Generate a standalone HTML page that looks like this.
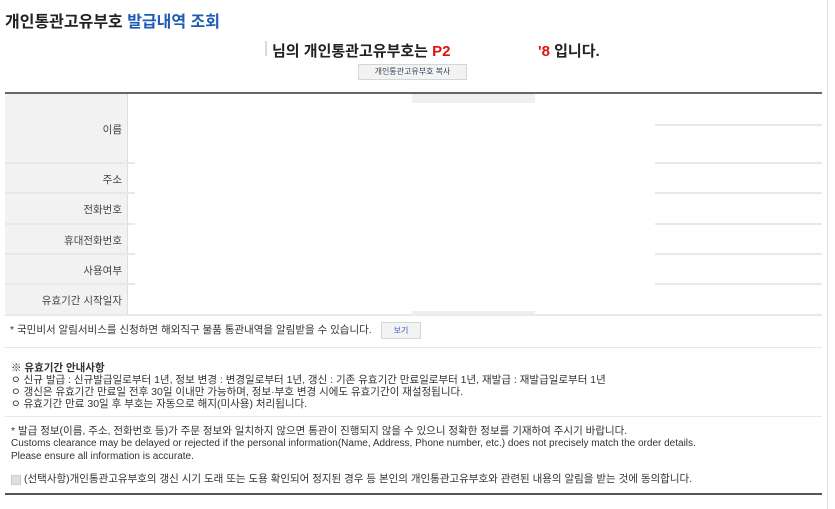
<!DOCTYPE html>
<html><head><meta charset="utf-8"><style>
body{margin:0;width:835px;height:509px;background:#fff;font-family:"Liberation Sans","Noto Sans CJK KR",sans-serif;position:relative;overflow:hidden;color:#333}
.a{position:absolute;white-space:nowrap}
.sb{position:absolute;left:827px;top:0;width:8px;height:509px;background:#fff;border-left:1px solid #ddd}
.lbl{position:absolute;left:5px;width:122px;background:#f2f2f2;border-right:1px solid #ddd}
.ln{position:absolute;height:2px;background:#e8e8e8}
.t{font-size:10.5px;color:#444;text-align:right;width:117px;left:5px}
.s{font-size:10.5px;color:#333;line-height:12px}
</style></head><body>
<div class="a" style="left:5px;top:8px;font-size:16px;font-weight:bold;color:#222">개인통관고유부호 <span style="color:#1f5bb5">발급내역 조회</span></div>
<div class="a" style="left:265px;top:41px;width:2px;height:15px;background:#cde"></div>
<div class="a" style="left:272px;top:40px;font-size:15px;font-weight:bold;color:#222">님의 개인통관고유부호는 <span style="color:#e01010">P2</span></div>
<div class="a" style="left:538px;top:40px;font-size:15px;font-weight:bold;color:#222"><span style="color:#e01010">'8</span> 입니다.</div>
<div class="a" style="left:358px;top:64px;width:107px;height:14px;border:1px solid #d5d5d5;background:#f3f3f3;font-size:8px;color:#345;text-align:center;line-height:14px">개인통관고유부호 복사</div>
<div class="a" style="left:5px;top:92px;width:817px;height:2px;background:#666"></div>
<div class="a" style="left:412px;top:94px;width:123px;height:9px;background:#f0f0f0"></div>
<div class="lbl" style="top:94px;height:221px"></div>
<div class="ln" style="left:5px;width:130px;top:162px"></div><div class="ln" style="left:655px;width:167px;top:162px"></div>
<div class="ln" style="left:5px;width:130px;top:192px"></div><div class="ln" style="left:655px;width:167px;top:192px"></div>
<div class="ln" style="left:5px;width:130px;top:223px"></div><div class="ln" style="left:655px;width:167px;top:223px"></div>
<div class="ln" style="left:5px;width:130px;top:253px"></div><div class="ln" style="left:655px;width:167px;top:253px"></div>
<div class="ln" style="left:5px;width:130px;top:283px"></div><div class="ln" style="left:655px;width:167px;top:283px"></div>
<div class="ln" style="left:5px;width:817px;top:314px"></div>
<div class="ln" style="left:655px;width:167px;top:124px"></div>
<div class="a" style="left:412px;top:311px;width:123px;height:4px;background:#eee"></div>
<div class="a t" style="top:122px">이름</div>
<div class="a t" style="top:172px">주소</div>
<div class="a t" style="top:202px">전화번호</div>
<div class="a t" style="top:233px">휴대전화번호</div>
<div class="a t" style="top:263px">사용여부</div>
<div class="a t" style="top:293px">유효기간 시작일자</div>
<div class="a s" style="left:10px;top:324px">* 국민비서 알림서비스를 신청하면 해외직구 물품 통관내역을 알림받을 수 있습니다.</div>
<div class="a" style="left:381px;top:322px;width:38px;height:15px;border:1px solid #d5d5d5;background:#f3f3f3;font-size:8px;color:#3a5fc0;text-align:center;line-height:15px">보기</div>
<div class="ln" style="left:5px;width:817px;top:347px;height:1px"></div>
<div class="a s" style="left:11px;top:362px">
<b>※ 유효기간 안내사항</b><br>ㅇ 신규 발급 : 신규발급일로부터 1년, 정보 변경 : 변경일로부터 1년, 갱신 : 기존 유효기간 만료일로부터 1년, 재발급 : 재발급일로부터 1년<br>ㅇ 갱신은 유효기간 만료일 전후 30일 이내만 가능하며, 정보·부호 변경 시에도 유효기간이 재설정됩니다.<br>ㅇ 유효기간 만료 30일 후 부호는 자동으로 해지(미사용) 처리됩니다.</div>
<div class="ln" style="left:5px;width:817px;top:416px;height:1px"></div>
<div class="a s" style="left:11px;top:425px">* 발급 정보(이름, 주소, 전화번호 등)가 주문 정보와 일치하지 않으면 통관이 진행되지 않을 수 있으니 정확한 정보를 기재하여 주시기 바랍니다.<br><span style="font-size:10px">Customs clearance may be delayed or rejected if the personal information(Name, Address, Phone number, etc.) does not precisely match the order details.<br>Please ensure all information is accurate.</span></div>
<div class="a" style="left:11px;top:475px;width:8px;height:8px;background:#ddd;border:1px solid #ccc"></div>
<div class="a s" style="left:24px;top:473px">(선택사항)개인통관고유부호의 갱신 시기 도래 또는 도용 확인되어 정지된 경우 등 본인의 개인통관고유부호와 관련된 내용의 알림을 받는 것에 동의합니다.</div>
<div class="a" style="left:5px;top:493px;width:817px;height:2px;background:#555"></div>
<div class="sb"></div>
</body></html>
